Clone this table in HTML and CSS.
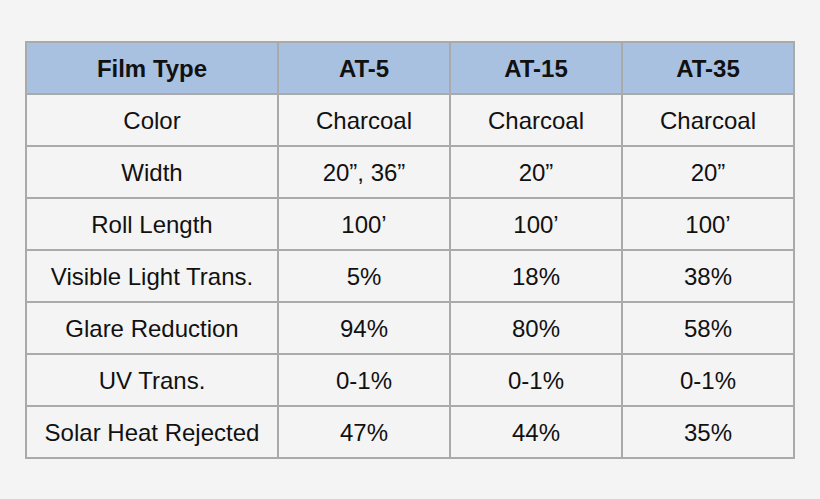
FILE: index.html
```html
<!DOCTYPE html>
<html>
<head>
<meta charset="utf-8">
<link rel="stylesheet" href="styles.css">
</head>
<body>
<div class="page">
<table class="spec">
<colgroup><col class="c-first"><col class="c-val"><col class="c-val"><col class="c-val"></colgroup>
<thead>
<tr><th>Film Type</th><th>AT-5</th><th>AT-15</th><th>AT-35</th></tr>
</thead>
<tbody>
<tr><td>Color</td><td>Charcoal</td><td>Charcoal</td><td>Charcoal</td></tr>
<tr><td>Width</td><td>20”, 36”</td><td>20”</td><td>20”</td></tr>
<tr><td>Roll Length</td><td>100’</td><td>100’</td><td>100’</td></tr>
<tr><td>Visible Light Trans.</td><td>5%</td><td>18%</td><td>38%</td></tr>
<tr><td>Glare Reduction</td><td>94%</td><td>80%</td><td>58%</td></tr>
<tr><td>UV Trans.</td><td>0-1%</td><td>0-1%</td><td>0-1%</td></tr>
<tr><td>Solar Heat Rejected</td><td>47%</td><td>44%</td><td>35%</td></tr>
</tbody>
</table>
</div>
</body>
</html>
```
FILE: styles.css
```css
html, body {
  margin: 0;
  padding: 0;
  background: #f4f4f4;
}
.page {
  padding: 41px 0 0 25px;
}
.spec {
  border-collapse: collapse;
  table-layout: fixed;
  width: 770px;
  font-family: "Liberation Sans", Arial, sans-serif;
  font-size: 24px;
  color: #111;
}
.c-first { width: 252px; }
.c-val { width: 172px; }
.spec th, .spec td {
  border: 2px solid #aaaaaa;
  height: 48px;
  padding: 2px 0 0;
  text-align: center;
  vertical-align: middle;
}
.spec th {
  background: #a8c1e1;
  font-weight: bold;
}
.spec td {
  background: #f4f4f4;
}
```
